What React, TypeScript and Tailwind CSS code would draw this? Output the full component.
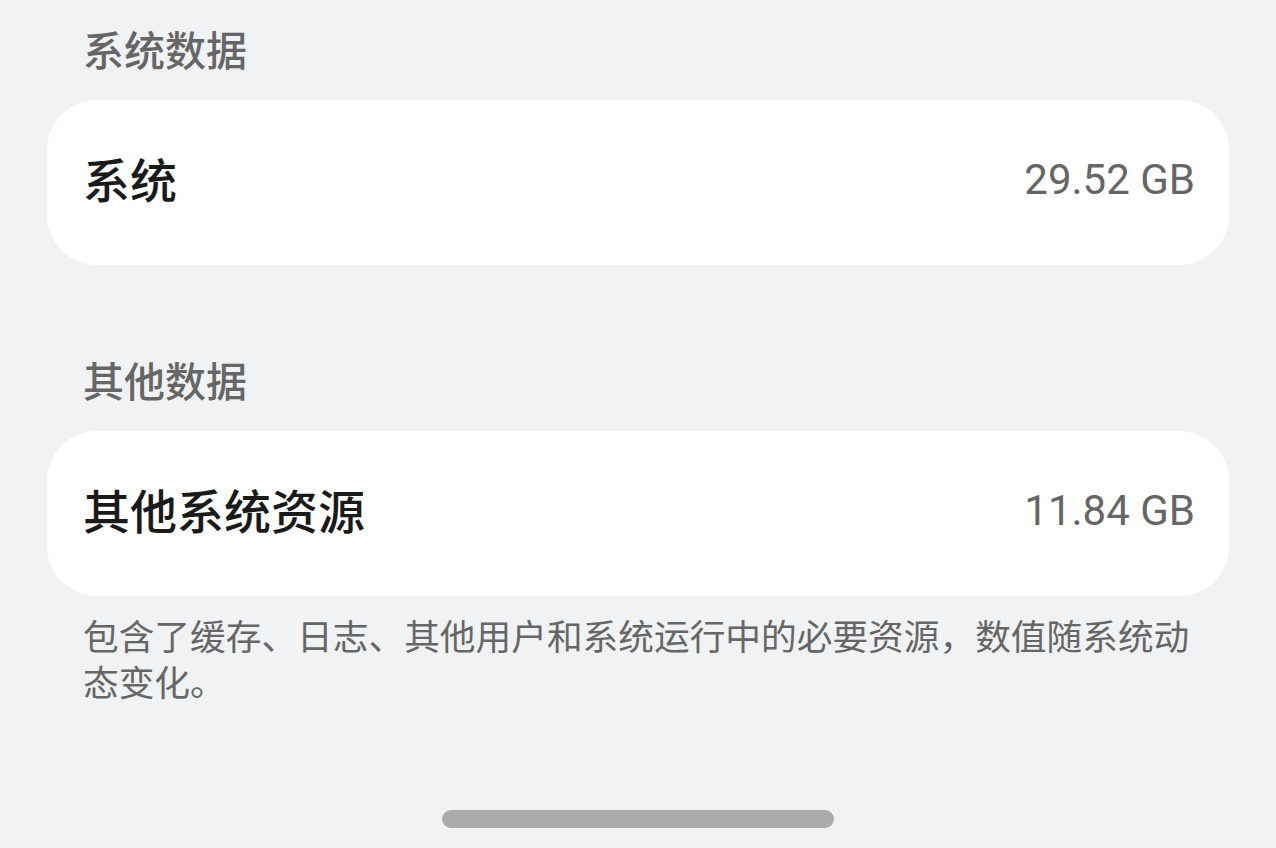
const sections = [
  { title: "系统数据", name: "系统", size: "29.52 GB" },
  { title: "其他数据", name: "其他系统资源", size: "11.84 GB" },
];

function Card({ name, size }: { name: string; size: string }) {
  return (
    <div className="mx-[47px] h-[165px] rounded-[50px] bg-white flex items-center justify-between pl-[36px] pr-[34px] pb-[10px]">
      <span className="text-[47px] leading-[56px] font-medium text-[#1a1a1a]">{name}</span>
      <span className="text-[42px] leading-[56px] pt-[4px] text-[#666666] font-['Roboto','Noto_Sans_CJK_SC',sans-serif]">
        {size}
      </span>
    </div>
  );
}

export default function App() {
  return (
    <div className="w-[1276px] h-[848px] bg-[#f1f2f4] flex flex-col overflow-hidden font-['Noto_Sans_CJK_SC','Noto_Sans',sans-serif]">
      <div className="pt-[20px] pb-[24px] pl-[83px] text-[41px] leading-[56px] font-medium text-[#666666]">
        {sections[0].title}
      </div>
      <Card name={sections[0].name} size={sections[0].size} />

      <div className="pt-[86px] pb-[24px] pl-[83px] text-[41px] leading-[56px] font-medium text-[#666666]">
        {sections[1].title}
      </div>
      <Card name={sections[1].name} size={sections[1].size} />

      <p className="mt-[16px] pl-[83px] w-[1203px] text-[35.7px] leading-[46px] text-[#666666]">
        包含了缓存、日志、其他用户和系统运行中的必要资源，数值随系统动态变化。
      </p>

      <div className="mt-auto mb-[20px] mx-auto w-[392px] h-[18px] rounded-full bg-[#aaabad]" />
    </div>
  );
}
